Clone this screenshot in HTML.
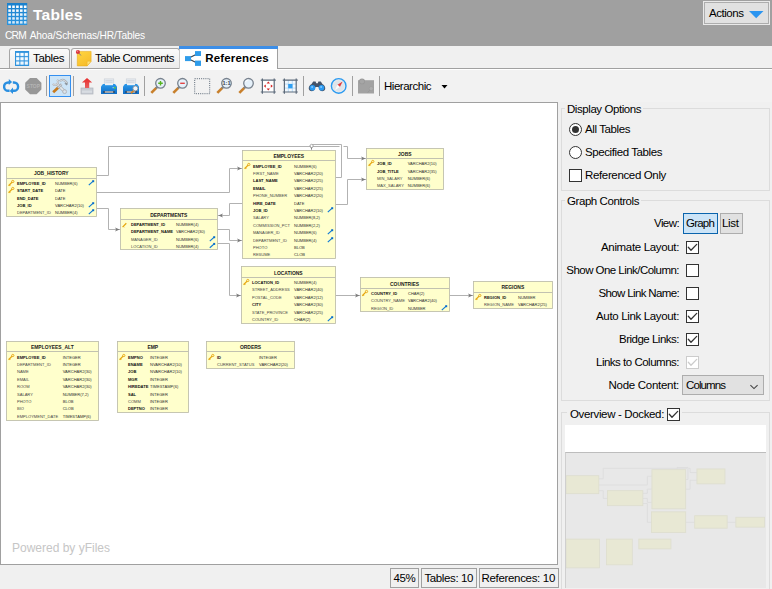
<!DOCTYPE html>
<html><head><meta charset="utf-8"><title>Tables</title>
<style>
html,body{margin:0;padding:0;}
body{width:772px;height:589px;overflow:hidden;background:#f0f0f0;position:relative;font-family:"Liberation Sans", sans-serif;}
.b{position:absolute;display:block;}
.t{position:absolute;white-space:nowrap;font-family:"Liberation Sans", sans-serif;}
</style></head><body>
<div class="b" style="left:0px;top:0px;width:772px;height:46px;background:#a0a0a0;"></div>
<svg class="b" style="left:7px;top:3px" width="21" height="22" viewBox="0 0 21 22"><defs><linearGradient id="tbg" x1="0" y1="0" x2="0" y2="1"><stop offset="0" stop-color="#1a80cc"/><stop offset="1" stop-color="#2a94de"/></linearGradient><linearGradient id="tbc" x1="0" y1="0" x2="0" y2="1"><stop offset="0" stop-color="#ffffff"/><stop offset="1" stop-color="#d8ecfa"/></linearGradient></defs><rect x="0" y="0" width="20.2" height="22" fill="url(#tbg)"/><rect x="1.3" y="2.5" width="2.6" height="2.5" fill="#fff" opacity="1.00"/><rect x="1.3" y="6.4" width="2.6" height="2.5" fill="#fff" opacity="0.95"/><rect x="1.3" y="10.3" width="2.6" height="2.5" fill="#fff" opacity="0.90"/><rect x="1.3" y="14.2" width="2.6" height="2.5" fill="#fff" opacity="0.85"/><rect x="1.3" y="18.1" width="2.6" height="2.5" fill="#fff" opacity="0.80"/><rect x="5.2" y="2.5" width="2.6" height="2.5" fill="#fff" opacity="1.00"/><rect x="5.2" y="6.4" width="2.6" height="2.5" fill="#fff" opacity="0.95"/><rect x="5.2" y="10.3" width="2.6" height="2.5" fill="#fff" opacity="0.90"/><rect x="5.2" y="14.2" width="2.6" height="2.5" fill="#fff" opacity="0.85"/><rect x="5.2" y="18.1" width="2.6" height="2.5" fill="#fff" opacity="0.80"/><rect x="9.1" y="2.5" width="2.6" height="2.5" fill="#fff" opacity="1.00"/><rect x="9.1" y="6.4" width="2.6" height="2.5" fill="#fff" opacity="0.95"/><rect x="9.1" y="10.3" width="2.6" height="2.5" fill="#fff" opacity="0.90"/><rect x="9.1" y="14.2" width="2.6" height="2.5" fill="#fff" opacity="0.85"/><rect x="9.1" y="18.1" width="2.6" height="2.5" fill="#fff" opacity="0.80"/><rect x="13.0" y="2.5" width="2.6" height="2.5" fill="#fff" opacity="1.00"/><rect x="13.0" y="6.4" width="2.6" height="2.5" fill="#fff" opacity="0.95"/><rect x="13.0" y="10.3" width="2.6" height="2.5" fill="#fff" opacity="0.90"/><rect x="13.0" y="14.2" width="2.6" height="2.5" fill="#fff" opacity="0.85"/><rect x="13.0" y="18.1" width="2.6" height="2.5" fill="#fff" opacity="0.80"/><rect x="16.9" y="2.5" width="2.6" height="2.5" fill="#fff" opacity="1.00"/><rect x="16.9" y="6.4" width="2.6" height="2.5" fill="#fff" opacity="0.95"/><rect x="16.9" y="10.3" width="2.6" height="2.5" fill="#fff" opacity="0.90"/><rect x="16.9" y="14.2" width="2.6" height="2.5" fill="#fff" opacity="0.85"/><rect x="16.9" y="18.1" width="2.6" height="2.5" fill="#fff" opacity="0.80"/></svg>
<div class="t" style="left:33.00px;top:8.03px;font-size:15.5px;line-height:14px;color:#fff;letter-spacing:0.274px;font-weight:bold;">Tables</div>
<div class="t" style="left:5.00px;top:29.17px;font-size:10.2px;line-height:14px;color:#fff;letter-spacing:-0.743px;">CRM</div>
<div class="t" style="left:29.70px;top:29.17px;font-size:10.2px;line-height:14px;color:#fff;letter-spacing:-0.162px;">Ahoa/Schemas/HR/Tables</div>
<div class="b" style="left:703px;top:1px;width:67px;height:24px;background:#e1e1e1;border:1px solid #e9e9e9;box-sizing:border-box;"></div>
<div class="b" style="left:704px;top:2px;width:65px;height:22px;background:#e1e1e1;border:1px solid #adadad;box-sizing:border-box;"></div>
<div class="t" style="left:709.00px;top:5.82px;font-size:11.5px;line-height:14px;color:#000;letter-spacing:-0.459px;">Actions</div>
<svg class="b" style="left:748px;top:10px" width="17" height="9" viewBox="0 0 17 9"><path d="M1,1 H15.5 L8.2,8.2 Z" fill="#2b95f0"/></svg>
<div class="b" style="left:0px;top:68px;width:772px;height:1px;background:#a0a0a0;"></div>
<div class="b" style="left:0px;top:69px;width:772px;height:1px;background:#fff;"></div>
<div class="b" style="left:9px;top:48px;width:61px;height:20px;background:linear-gradient(#fbfbfb,#ebebeb);border:1px solid #a6a6a6;border-bottom:none;border-radius:3px 3px 0 0;box-sizing:border-box;"></div>
<div class="b" style="left:71px;top:48px;width:109px;height:20px;background:linear-gradient(#fbfbfb,#ebebeb);border:1px solid #a6a6a6;border-bottom:none;border-radius:3px 3px 0 0;box-sizing:border-box;"></div>
<div class="b" style="left:179px;top:46px;width:99px;height:23px;background:#fff;border-right:1px solid #a0a0a0;border-left:1px solid #c8c8c8;box-sizing:border-box;"></div>
<div class="b" style="left:179px;top:46px;width:99px;height:3px;background:#3c8ee8;"></div>
<svg class="b" style="left:15px;top:51px" width="15" height="15" viewBox="0 0 15 15"><rect x="0" y="0" width="14.1" height="15" fill="#2f92dc"/><rect x="1.0" y="1.8" width="3.5" height="3.4" fill="#a8d4f4"/><rect x="1.3" y="2.1" width="2.8" height="2.7" fill="#ffffff" opacity="0.95"/><rect x="1.0" y="6.1" width="3.5" height="3.4" fill="#a8d4f4"/><rect x="1.3" y="6.4" width="2.8" height="2.7" fill="#ffffff" opacity="0.87"/><rect x="1.0" y="10.4" width="3.5" height="3.4" fill="#a8d4f4"/><rect x="1.3" y="10.7" width="2.8" height="2.7" fill="#ffffff" opacity="0.79"/><rect x="5.3" y="1.8" width="3.5" height="3.4" fill="#a8d4f4"/><rect x="5.6" y="2.1" width="2.8" height="2.7" fill="#ffffff" opacity="0.95"/><rect x="5.3" y="6.1" width="3.5" height="3.4" fill="#a8d4f4"/><rect x="5.6" y="6.4" width="2.8" height="2.7" fill="#ffffff" opacity="0.87"/><rect x="5.3" y="10.4" width="3.5" height="3.4" fill="#a8d4f4"/><rect x="5.6" y="10.7" width="2.8" height="2.7" fill="#ffffff" opacity="0.79"/><rect x="9.6" y="1.8" width="3.5" height="3.4" fill="#a8d4f4"/><rect x="9.9" y="2.1" width="2.8" height="2.7" fill="#ffffff" opacity="0.95"/><rect x="9.6" y="6.1" width="3.5" height="3.4" fill="#a8d4f4"/><rect x="9.9" y="6.4" width="2.8" height="2.7" fill="#ffffff" opacity="0.87"/><rect x="9.6" y="10.4" width="3.5" height="3.4" fill="#a8d4f4"/><rect x="9.9" y="10.7" width="2.8" height="2.7" fill="#ffffff" opacity="0.79"/></svg>
<div class="t" style="left:33.00px;top:50.52px;font-size:11.5px;line-height:14px;color:#000;letter-spacing:-0.324px;">Tables</div>
<svg class="b" style="left:75px;top:49px" width="18" height="18" viewBox="0 0 18 18"><defs><linearGradient id="ng" x1="0" y1="0" x2="0.6" y2="1"><stop offset="0" stop-color="#ffd640"/><stop offset="1" stop-color="#f7bd2c"/></linearGradient></defs><path d="M2.3,2.4 H16.1 V12.2 L12.2,16.9 H2.3 Z" fill="url(#ng)" stroke="#e8ab1c" stroke-width="0.6"/><path d="M16.1,12.2 H12.2 V16.9 Z" fill="#ffe27c" stroke="#e8ab1c" stroke-width="0.4"/><path d="M4.0,4.2 L5.9,6.5" stroke="#6c7c8c" stroke-width="0.9"/><circle cx="2.9" cy="3.0" r="2.1" fill="#d8363f"/><circle cx="2.4" cy="2.4" r="0.8" fill="#ee7c84"/></svg>
<div class="t" style="left:95.00px;top:50.52px;font-size:11.5px;line-height:14px;color:#000;letter-spacing:-0.520px;">Table Comments</div>
<svg class="b" style="left:185px;top:51px" width="16" height="15" viewBox="0 0 16 15"><path d="M3,7.5 L12.5,2.7 M3,7.5 L12.5,12.3" stroke="#364452" stroke-width="1.2" fill="none"/><rect x="0" y="5.1" width="6" height="5" fill="#2f9cea"/><rect x="10" y="0.1" width="6" height="4.9" fill="#2f9cea"/><rect x="10" y="9.6" width="6" height="5.3" fill="#2f9cea"/></svg>
<div class="t" style="left:205.30px;top:51.42px;font-size:11.5px;line-height:14px;color:#000;letter-spacing:0.149px;font-weight:bold;">References</div>
<div class="b" style="left:0px;top:70px;width:772px;height:32px;background:#f2f2f2;"></div>
<div class="b" style="left:46px;top:76px;width:1px;height:20px;background:#a0a0a0;"></div>
<div class="b" style="left:73px;top:76px;width:1px;height:20px;background:#a0a0a0;"></div>
<div class="b" style="left:144px;top:76px;width:1px;height:20px;background:#a0a0a0;"></div>
<div class="b" style="left:303px;top:76px;width:1px;height:20px;background:#a0a0a0;"></div>
<div class="b" style="left:352px;top:76px;width:1px;height:20px;background:#a0a0a0;"></div>
<div class="b" style="left:379px;top:76px;width:1px;height:20px;background:#a0a0a0;"></div>
<div class="b" style="left:49px;top:75px;width:22px;height:22px;background:#cce4f7;border:1px solid #338ff0;box-sizing:border-box;"></div>
<svg class="b" style="left:3px;top:78px" width="17" height="17" viewBox="0 0 17 17"><g fill="none" stroke="#2a8fe0" stroke-width="2.4"><path d="M6.0,4.5 H5.2 A4.1,4.15 0 0 0 5.2,12.8 H6.6"/><path d="M10.0,12.8 H11.0 A4.1,4.15 0 0 0 11.0,4.5 H9.8"/></g><path d="M5.8,1.0 L9.1,4.0 L5.8,7.0 Z" fill="#2a8fe0"/><path d="M10.0,9.6 L6.7,12.9 L10.0,16.0 Z" fill="#2a8fe0"/></svg>
<svg class="b" style="left:25px;top:78px" width="17" height="17" viewBox="0 0 17 17"><path d="M5,0 H11.6 L16.4,4.8 V11.4 L11.6,16.2 H5 L0.2,11.4 V4.8 Z" fill="#979797"/><text x="8.3" y="10.3" font-size="5.4" font-weight="bold" text-anchor="middle" fill="#b4b4b4" font-family='"Liberation Sans", sans-serif' textLength="13.4" lengthAdjust="spacingAndGlyphs">STOP</text></svg>
<svg class="b" style="left:52px;top:78px" width="17" height="17" viewBox="0 0 17 17"><path d="M5.4,6.4 L12.4,13.4" stroke="#aeb3b9" stroke-width="3.1" stroke-linecap="round"/><path d="M5.4,6.4 L12.4,13.4" stroke="#e4e7ea" stroke-width="1.6" stroke-linecap="round"/><path d="M5.2,1.8 A3.0,3.0 0 1 1 0.8,5.9" fill="none" stroke="#b2b7bd" stroke-width="2"/><path d="M5.2,1.8 A3.0,3.0 0 1 1 0.8,5.9" fill="none" stroke="#dfe2e6" stroke-width="0.8"/><circle cx="12.6" cy="13.6" r="2" fill="#d8dbdf" stroke="#a6abb1" stroke-width="0.7"/><circle cx="12.7" cy="13.7" r="0.8" fill="#d4e8f8"/><path d="M1.2,14.3 L6.3,9.5" stroke="#c87a1c" stroke-width="2.7" stroke-linecap="butt"/><path d="M6.0,9.8 L9.6,6.2" stroke="#a9aeb4" stroke-width="2.4"/><path d="M6.0,9.8 L9.6,6.2" stroke="#dcdfe3" stroke-width="0.9"/><path d="M7.8,3.2 Q10.4,0.6 13.2,3.0 L15.2,5.2" fill="none" stroke="#aab0b6" stroke-width="2.3"/><path d="M7.8,3.2 Q10.4,0.6 13.2,3.0 L15.2,5.2" fill="none" stroke="#dde0e4" stroke-width="0.9"/><path d="M12.4,5.2 L14.4,7.6 L15.8,6.2 L15.4,4.8 Z" fill="#8f969d"/></svg>
<svg class="b" style="left:79px;top:78px" width="17" height="17" viewBox="0 0 17 17"><defs><linearGradient id="eg" x1="0" y1="0" x2="0" y2="1"><stop offset="0" stop-color="#e82c2c"/><stop offset="1" stop-color="#e86060"/></linearGradient></defs><rect x="2" y="10" width="12" height="6" fill="#c9cdd4" stroke="#b0b4bc" stroke-width="0.7"/><rect x="3" y="12.6" width="10" height="2.2" fill="#d8dce2"/><path d="M8,0 L13.2,4.6 H10.2 V10 H6 V4.6 H2.9 Z" fill="url(#eg)"/></svg>
<svg class="b" style="left:100px;top:78px" width="18" height="17" viewBox="0 0 18 17"><defs><linearGradient id="pg" x1="0" y1="0" x2="0" y2="1"><stop offset="0" stop-color="#2c9aec"/><stop offset="1" stop-color="#0f6cc4"/></linearGradient></defs><rect x="4.2" y="0.9" width="9.6" height="6" fill="#e6eaf0" stroke="#c4cad2" stroke-width="0.5"/><path d="M5.4,2.6 H12.6 M5.4,4.2 H12.6" stroke="#c4cad2" stroke-width="0.6"/><path d="M3,6 H15 L17,8.4 V15.9 H1 V8.4 Z" fill="url(#pg)"/><rect x="5" y="5.6" width="8" height="1.6" fill="#eef2f6"/><rect x="3.6" y="13" width="10.8" height="2" fill="#1a2a3a"/><rect x="4.6" y="13.4" width="8.8" height="1.2" fill="#f0f4f8"/><rect x="14" y="9" width="1.6" height="1.6" fill="#5ad040"/><rect x="12.6" y="9.2" width="1" height="1" fill="#cfe8ff"/></svg>
<svg class="b" style="left:122px;top:78px" width="18" height="17" viewBox="0 0 18 17"><defs><linearGradient id="pg" x1="0" y1="0" x2="0" y2="1"><stop offset="0" stop-color="#2c9aec"/><stop offset="1" stop-color="#0f6cc4"/></linearGradient></defs><rect x="4.2" y="0.9" width="9.6" height="6" fill="#e6eaf0" stroke="#c4cad2" stroke-width="0.5"/><path d="M5.4,2.6 H12.6 M5.4,4.2 H12.6" stroke="#c4cad2" stroke-width="0.6"/><path d="M3,6 H15 L17,8.4 V15.9 H1 V8.4 Z" fill="url(#pg)"/><rect x="5" y="5.6" width="8" height="1.6" fill="#eef2f6"/><rect x="3.6" y="13" width="10.8" height="2" fill="#1a2a3a"/><rect x="4.6" y="13.4" width="8.8" height="1.2" fill="#f0f4f8"/><path d="M9,15.4 L12.2,12" stroke="#d08428" stroke-width="1.6"/><circle cx="13.4" cy="10.4" r="2.5" fill="#eef4fa" stroke="#8a929c" stroke-width="0.9"/></svg>
<svg class="b" style="left:149px;top:77px" width="18" height="18" viewBox="0 0 18 18"><path d="M2.3,15.9 L7.6,10.6" stroke="#c8802c" stroke-width="2.6" stroke-linecap="butt"/><path d="M7.0,11.2 L8.4,9.8" stroke="#7c8692" stroke-width="2.2"/><circle cx="11.5" cy="6.3" r="4.8" fill="#e6f1fa" stroke="#78828e" stroke-width="1.3"/><path d="M9.2,6.3 H13.8 M11.5,4 V8.6" stroke="#56b41e" stroke-width="1.4"/></svg>
<svg class="b" style="left:171px;top:77px" width="18" height="18" viewBox="0 0 18 18"><path d="M2.3,15.9 L7.6,10.6" stroke="#c8802c" stroke-width="2.6" stroke-linecap="butt"/><path d="M7.0,11.2 L8.4,9.8" stroke="#7c8692" stroke-width="2.2"/><circle cx="11.5" cy="6.3" r="4.8" fill="#e6f1fa" stroke="#78828e" stroke-width="1.3"/><path d="M9.2,6.3 H13.8" stroke="#e24444" stroke-width="1.4"/></svg>
<svg class="b" style="left:193px;top:77px" width="18" height="18" viewBox="0 0 18 18"><rect x="1.7" y="1.7" width="15" height="15" fill="none" stroke="#4c5a6a" stroke-width="0.9" stroke-dasharray="1,1.14"/></svg>
<svg class="b" style="left:215px;top:77px" width="18" height="18" viewBox="0 0 18 18"><path d="M2.3,15.9 L7.6,10.6" stroke="#c8802c" stroke-width="2.6" stroke-linecap="butt"/><path d="M7.0,11.2 L8.4,9.8" stroke="#7c8692" stroke-width="2.2"/><circle cx="11.5" cy="6.3" r="4.8" fill="#e6f1fa" stroke="#78828e" stroke-width="1.3"/><text x="11.5" y="8.3" font-size="5.6" font-weight="bold" text-anchor="middle" fill="#3c444c" font-family='"Liberation Sans", sans-serif'>1:1</text></svg>
<svg class="b" style="left:237px;top:77px" width="18" height="18" viewBox="0 0 18 18"><path d="M2.3,15.9 L7.6,10.6" stroke="#c8802c" stroke-width="2.6" stroke-linecap="butt"/><path d="M7.0,11.2 L8.4,9.8" stroke="#7c8692" stroke-width="2.2"/><circle cx="11.5" cy="6.3" r="4.8" fill="#e6f1fa" stroke="#78828e" stroke-width="1.3"/><path d="M8.4,5.2 A3.4,3.4 0 0 1 11.4,2.8" stroke="#fff" stroke-width="1" fill="none"/></svg>
<svg class="b" style="left:259.5px;top:77px" width="18" height="18" viewBox="0 0 18 18"><rect x="2" y="3" width="12.4" height="12.4" fill="#fff"/><path d="M2.4,1.4 V16.8 M14.2,1.4 V16.8 M0.8,3.2 H15.8 M0.8,15 H15.8" stroke="#5c6a7a" stroke-width="1.2"/><path d="M8.3,4.6 l1.7,2 h-3.4 z M8.3,13.6 l1.7,-2 h-3.4 z M3.8,9.1 l2,-1.7 v3.4 z M12.8,9.1 l-2,-1.7 v3.4 z" fill="#d42222"/></svg>
<svg class="b" style="left:281.5px;top:77px" width="18" height="18" viewBox="0 0 18 18"><rect x="2" y="3" width="12.4" height="12.4" fill="#f2f8fd"/><path d="M6.3,3 V15 M10.3,3 V15 M2,7.1 H14 M2,11.1 H14" stroke="#b4d8f4" stroke-width="0.9"/><path d="M2.4,1.4 V16.8 M14.2,1.4 V16.8 M0.8,3.2 H15.8 M0.8,15 H15.8" stroke="#5c6a7a" stroke-width="1.2"/><rect x="6.2" y="7" width="4.3" height="4.3" fill="#2e9ff2"/></svg>
<svg class="b" style="left:308px;top:78px" width="18" height="17" viewBox="0 0 18 17"><path d="M5.2,3.6 H7.6 L8.2,5.2 H9.8 L10.4,3.6 H12.8 L14.4,6 C16.6,7.4 17.6,9.2 17.2,11 C16.6,13.2 14,13.6 12.6,12.8 C11,12 10.8,10.4 10.6,9 H7.4 C7.2,10.4 7,12 5.4,12.8 C4,13.6 1.4,13.2 0.8,11 C0.4,9.2 1.4,7.4 3.6,6 Z" fill="#44546a"/><circle cx="4.5" cy="9.8" r="2.8" fill="#2b9cf4"/><circle cx="13.5" cy="9.8" r="2.8" fill="#2b9cf4"/><circle cx="4.1" cy="9.0" r="1" fill="#86c8ff"/><circle cx="13.1" cy="9.0" r="1" fill="#86c8ff"/></svg>
<svg class="b" style="left:330px;top:77px" width="18" height="18" viewBox="0 0 18 18"><circle cx="8.7" cy="8.9" r="7.3" fill="#e6eaee" stroke="#2a9af0" stroke-width="1.4"/><circle cx="8.7" cy="8.9" r="5.6" fill="#dfe4e9"/><path d="M12.6,4.6 L9.9,10.1 L7.5,7.7 Z" fill="#e23c3c"/><path d="M4.8,13.2 L7.5,7.7 L9.9,10.1 Z" fill="#fafbfc"/></svg>
<svg class="b" style="left:357px;top:78px" width="18" height="17" viewBox="0 0 18 17"><rect x="1" y="2.2" width="16" height="13.3" fill="#a2a2a2"/><circle cx="5" cy="3.5" r="3" fill="#9a9a9a"/><circle cx="5" cy="3.5" r="2.1" fill="#a6a6a6"/><circle cx="14.2" cy="10.6" r="2.1" fill="#aeaeae" stroke="#989898" stroke-width="0.6"/><path d="M12.8,12.2 L10.6,14.6" stroke="#989898" stroke-width="1"/></svg>
<div class="t" style="left:384.00px;top:79.02px;font-size:11.5px;line-height:14px;color:#000;letter-spacing:-0.476px;">Hierarchic</div>
<svg class="b" style="left:441px;top:85px" width="7" height="5" viewBox="0 0 7 5"><path d="M0.5,0.1 H6.5 L3.5,3.6 Z" fill="#000"/></svg>
<div class="b" style="left:0px;top:102px;width:558px;height:463px;background:#fff;border:1px solid #a0a0a0;box-sizing:border-box;"></div>
<svg class="b" style="left:0;top:0" width="772" height="589" viewBox="0 0 772 589" font-family='"Liberation Sans", sans-serif'><path d="M96.5,175.5 L108.5,175.5 L108.5,146.5 L339.5,146.5" fill="none" stroke="#b2b2b2" stroke-width="1"/>
<path d="M343.5,146.5 L347.5,146.5 L347.5,158.5 L366.5,158.5" fill="none" stroke="#b2b2b2" stroke-width="1"/>
<path d="M365.6,158.5 l-4.6,-2 l1.2,2 l-1.2,2 z" fill="#7a7a7a"/>
<path d="M96.5,192.5 L229.5,192.5 L229.5,168.5 L242.5,168.5" fill="none" stroke="#b2b2b2" stroke-width="1"/>
<path d="M241.6,168.5 l-4.6,-2 l1.2,2 l-1.2,2 z" fill="#7a7a7a"/>
<path d="M96.5,208.5 L108.5,208.5 L108.5,229.5 L120.5,229.5" fill="none" stroke="#b2b2b2" stroke-width="1"/>
<path d="M119.6,229.5 l-4.6,-2 l1.2,2 l-1.2,2 z" fill="#7a7a7a"/>
<path d="M242.5,203.5 L229.5,203.5 L229.5,215.5 L217.5,215.5" fill="none" stroke="#b2b2b2" stroke-width="1"/>
<path d="M218.4,215.5 l4.6,-2 l-1.2,2 l1.2,2 z" fill="#7a7a7a"/>
<path d="M217.5,229.5 L229.5,229.5 L229.5,240.5 L242.5,240.5" fill="none" stroke="#b2b2b2" stroke-width="1"/>
<path d="M241.6,240.5 l-4.6,-2 l1.2,2 l-1.2,2 z" fill="#7a7a7a"/>
<path d="M217.5,243.5 L229.5,243.5 L229.5,295.5 L241.5,295.5" fill="none" stroke="#b2b2b2" stroke-width="1"/>
<path d="M240.6,295.5 l-4.6,-2 l1.2,2 l-1.2,2 z" fill="#7a7a7a"/>
<path d="M335.5,177.5 L341.5,177.5 L341.5,144.5 L311.5,144.5 L311.5,150.5" fill="none" stroke="#b2b2b2" stroke-width="1"/>
<path d="M311.5,149.6 l-2,-4.6 l2,1.2 l2,-1.2 z" fill="#7a7a7a"/>
<path d="M335.5,204.5 L347.5,204.5 L347.5,179.5 L366.5,179.5" fill="none" stroke="#b2b2b2" stroke-width="1"/>
<path d="M365.6,179.5 l-4.6,-2 l1.2,2 l-1.2,2 z" fill="#7a7a7a"/>
<path d="M335.5,295.5 L360.5,295.5" fill="none" stroke="#b2b2b2" stroke-width="1"/>
<path d="M359.6,295.5 l-4.6,-2 l1.2,2 l-1.2,2 z" fill="#7a7a7a"/>
<path d="M449.5,295.5 L473.5,295.5" fill="none" stroke="#b2b2b2" stroke-width="1"/>
<path d="M472.6,295.5 l-4.6,-2 l1.2,2 l-1.2,2 z" fill="#7a7a7a"/>
<rect x="310.3" y="144.3" width="2.6" height="3.2" rx="1" fill="#fff" stroke="#8a8a8a" stroke-width="0.6"/>
<rect x="6.5" y="167.5" width="90.0" height="49.0" fill="#ffffcc" stroke="#bcbcaa" stroke-width="0.85"/>
<path d="M6.5,178.5 H96.5" stroke="#c2c2b0" stroke-width="1"/>
<text x="51.3" y="174.8" text-anchor="middle" font-size="4.95" font-weight="bold" fill="#1a1a1a">JOB_HISTORY</text>
<text x="17" y="184.8" font-size="4.05" font-weight="bold" fill="#111">EMPLOYEE_ID</text>
<text x="55" y="184.8" font-size="4.05" fill="#303030">NUMBER(6)</text>
<g transform="translate(8.1,180.0)"><path d="M0.5,5.7 L4.2,1.9" stroke="#e6a50c" stroke-width="1.25" fill="none"/><circle cx="4.7" cy="1.5" r="1.15" fill="#fff6c0" stroke="#e6a50c" stroke-width="0.85"/><path d="M1.3,4.9 l1,1" stroke="#e6a50c" stroke-width="0.8"/></g>
<g transform="translate(88.3,180.1)"><path d="M0.5,5.0 L4.6,1.3" stroke="#0f7ad6" stroke-width="1.2" fill="none"/><rect x="3.9" y="0.1" width="2" height="2" fill="#0a6ecc"/></g>
<text x="17" y="191.8" font-size="4.05" font-weight="bold" fill="#111">START_DATE</text>
<text x="55" y="191.8" font-size="4.05" fill="#303030">DATE</text>
<g transform="translate(8.1,187.0)"><path d="M0.5,5.7 L4.2,1.9" stroke="#e6a50c" stroke-width="1.25" fill="none"/><circle cx="4.7" cy="1.5" r="1.15" fill="#fff6c0" stroke="#e6a50c" stroke-width="0.85"/><path d="M1.3,4.9 l1,1" stroke="#e6a50c" stroke-width="0.8"/></g>
<text x="17" y="199.8" font-size="4.05" font-weight="bold" fill="#111">END_DATE</text>
<text x="55" y="199.8" font-size="4.05" fill="#303030">DATE</text>
<text x="17" y="206.8" font-size="4.05" font-weight="bold" fill="#111">JOB_ID</text>
<text x="55" y="206.8" font-size="4.05" fill="#303030">VARCHAR2(10)</text>
<g transform="translate(88.3,202.1)"><path d="M0.5,5.0 L4.6,1.3" stroke="#0f7ad6" stroke-width="1.2" fill="none"/><rect x="3.9" y="0.1" width="2" height="2" fill="#0a6ecc"/></g>
<text x="17" y="213.8" font-size="4.05" fill="#484848">DEPARTMENT_ID</text>
<text x="55" y="213.8" font-size="4.05" fill="#303030">NUMBER(4)</text>
<g transform="translate(88.3,209.1)"><path d="M0.5,5.0 L4.6,1.3" stroke="#0f7ad6" stroke-width="1.2" fill="none"/><rect x="3.9" y="0.1" width="2" height="2" fill="#0a6ecc"/></g>
<rect x="120.5" y="208.5" width="97.0" height="41.0" fill="#ffffcc" stroke="#bcbcaa" stroke-width="0.85"/>
<path d="M120.5,219.5 H217.5" stroke="#c2c2b0" stroke-width="1"/>
<text x="168.8" y="216.5" text-anchor="middle" font-size="4.95" font-weight="bold" fill="#1a1a1a">DEPARTMENTS</text>
<text x="131" y="226.2" font-size="4.05" font-weight="bold" fill="#111">DEPARTMENT_ID</text>
<text x="176" y="226.2" font-size="4.05" fill="#303030">NUMBER(4)</text>
<g transform="translate(122.1,221.4)"><path d="M0.5,5.7 L4.2,1.9" stroke="#e6a50c" stroke-width="1.25" fill="none"/><path d="M1.3,4.9 l1,1" stroke="#e6a50c" stroke-width="0.8"/></g>
<text x="131" y="232.8" font-size="4.05" font-weight="bold" fill="#111">DEPARTMENT_NAME</text>
<text x="176" y="232.8" font-size="4.05" fill="#303030">VARCHAR2(30)</text>
<text x="131" y="240.8" font-size="4.05" fill="#484848">MANAGER_ID</text>
<text x="176" y="240.8" font-size="4.05" fill="#303030">NUMBER(6)</text>
<g transform="translate(209.3,236.1)"><path d="M0.5,5.0 L4.6,1.3" stroke="#0f7ad6" stroke-width="1.2" fill="none"/><rect x="3.9" y="0.1" width="2" height="2" fill="#0a6ecc"/></g>
<text x="131" y="247.5" font-size="4.05" fill="#484848">LOCATION_ID</text>
<text x="176" y="247.5" font-size="4.05" fill="#303030">NUMBER(4)</text>
<g transform="translate(209.3,242.8)"><path d="M0.5,5.0 L4.6,1.3" stroke="#0f7ad6" stroke-width="1.2" fill="none"/><rect x="3.9" y="0.1" width="2" height="2" fill="#0a6ecc"/></g>
<rect x="242.5" y="150.5" width="93.0" height="108.0" fill="#ffffcc" stroke="#bcbcaa" stroke-width="0.85"/>
<path d="M242.5,160.5 H335.5" stroke="#c2c2b0" stroke-width="1"/>
<text x="288.8" y="157.8" text-anchor="middle" font-size="4.95" font-weight="bold" fill="#1a1a1a">EMPLOYEES</text>
<text x="253" y="167.8" font-size="4.05" font-weight="bold" fill="#111">EMPLOYEE_ID</text>
<text x="294" y="167.8" font-size="4.05" fill="#303030">NUMBER(6)</text>
<g transform="translate(244.1,163.0)"><path d="M0.5,5.7 L4.2,1.9" stroke="#e6a50c" stroke-width="1.25" fill="none"/><circle cx="4.7" cy="1.5" r="1.15" fill="#fff6c0" stroke="#e6a50c" stroke-width="0.85"/><path d="M1.3,4.9 l1,1" stroke="#e6a50c" stroke-width="0.8"/></g>
<text x="253" y="174.8" font-size="4.05" fill="#484848">FIRST_NAME</text>
<text x="294" y="174.8" font-size="4.05" fill="#303030">VARCHAR2(20)</text>
<text x="253" y="181.8" font-size="4.05" font-weight="bold" fill="#111">LAST_NAME</text>
<text x="294" y="181.8" font-size="4.05" fill="#303030">VARCHAR2(25)</text>
<text x="253" y="189.8" font-size="4.05" font-weight="bold" fill="#111">EMAIL</text>
<text x="294" y="189.8" font-size="4.05" fill="#303030">VARCHAR2(25)</text>
<text x="253" y="196.8" font-size="4.05" fill="#484848">PHONE_NUMBER</text>
<text x="294" y="196.8" font-size="4.05" fill="#303030">VARCHAR2(20)</text>
<text x="253" y="204.8" font-size="4.05" font-weight="bold" fill="#111">HIRE_DATE</text>
<text x="294" y="204.8" font-size="4.05" fill="#303030">DATE</text>
<text x="253" y="211.8" font-size="4.05" font-weight="bold" fill="#111">JOB_ID</text>
<text x="294" y="211.8" font-size="4.05" fill="#303030">VARCHAR2(10)</text>
<g transform="translate(327.3,207.1)"><path d="M0.5,5.0 L4.6,1.3" stroke="#0f7ad6" stroke-width="1.2" fill="none"/><rect x="3.9" y="0.1" width="2" height="2" fill="#0a6ecc"/></g>
<text x="253" y="218.8" font-size="4.05" fill="#484848">SALARY</text>
<text x="294" y="218.8" font-size="4.05" fill="#303030">NUMBER(8,2)</text>
<text x="253" y="226.8" font-size="4.05" fill="#484848">COMMISSION_PCT</text>
<text x="294" y="226.8" font-size="4.05" fill="#303030">NUMBER(2,2)</text>
<text x="253" y="233.8" font-size="4.05" fill="#484848">MANAGER_ID</text>
<text x="294" y="233.8" font-size="4.05" fill="#303030">NUMBER(6)</text>
<g transform="translate(327.3,229.1)"><path d="M0.5,5.0 L4.6,1.3" stroke="#0f7ad6" stroke-width="1.2" fill="none"/><rect x="3.9" y="0.1" width="2" height="2" fill="#0a6ecc"/></g>
<text x="253" y="241.8" font-size="4.05" fill="#484848">DEPARTMENT_ID</text>
<text x="294" y="241.8" font-size="4.05" fill="#303030">NUMBER(4)</text>
<g transform="translate(327.3,237.1)"><path d="M0.5,5.0 L4.6,1.3" stroke="#0f7ad6" stroke-width="1.2" fill="none"/><rect x="3.9" y="0.1" width="2" height="2" fill="#0a6ecc"/></g>
<text x="253" y="248.8" font-size="4.05" fill="#484848">PHOTO</text>
<text x="294" y="248.8" font-size="4.05" fill="#303030">BLOB</text>
<text x="253" y="255.8" font-size="4.05" fill="#484848">RESUME</text>
<text x="294" y="255.8" font-size="4.05" fill="#303030">CLOB</text>
<rect x="366.5" y="148.5" width="77.0" height="41.0" fill="#ffffcc" stroke="#bcbcaa" stroke-width="0.85"/>
<path d="M366.5,158.5 H443.5" stroke="#c2c2b0" stroke-width="1"/>
<text x="404.8" y="155.8" text-anchor="middle" font-size="4.95" font-weight="bold" fill="#1a1a1a">JOBS</text>
<text x="377" y="164.8" font-size="4.05" font-weight="bold" fill="#111">JOB_ID</text>
<text x="407.7" y="164.8" font-size="4.05" fill="#303030">VARCHAR2(10)</text>
<g transform="translate(368.1,160.0)"><path d="M0.5,5.7 L4.2,1.9" stroke="#e6a50c" stroke-width="1.25" fill="none"/><circle cx="4.7" cy="1.5" r="1.15" fill="#fff6c0" stroke="#e6a50c" stroke-width="0.85"/><path d="M1.3,4.9 l1,1" stroke="#e6a50c" stroke-width="0.8"/></g>
<text x="377" y="172.8" font-size="4.05" font-weight="bold" fill="#111">JOB_TITLE</text>
<text x="407.7" y="172.8" font-size="4.05" fill="#303030">VARCHAR2(35)</text>
<text x="377" y="179.8" font-size="4.05" fill="#484848">MIN_SALARY</text>
<text x="407.7" y="179.8" font-size="4.05" fill="#303030">NUMBER(6)</text>
<text x="377" y="186.8" font-size="4.05" fill="#484848">MAX_SALARY</text>
<text x="407.7" y="186.8" font-size="4.05" fill="#303030">NUMBER(6)</text>
<rect x="241.5" y="266.5" width="94.0" height="57.0" fill="#ffffcc" stroke="#bcbcaa" stroke-width="0.85"/>
<path d="M241.5,277.5 H335.5" stroke="#c2c2b0" stroke-width="1"/>
<text x="288.3" y="274.5" text-anchor="middle" font-size="4.95" font-weight="bold" fill="#1a1a1a">LOCATIONS</text>
<text x="252" y="283.8" font-size="4.05" font-weight="bold" fill="#111">LOCATION_ID</text>
<text x="294" y="283.8" font-size="4.05" fill="#303030">NUMBER(4)</text>
<g transform="translate(243.1,279.0)"><path d="M0.5,5.7 L4.2,1.9" stroke="#e6a50c" stroke-width="1.25" fill="none"/><circle cx="4.7" cy="1.5" r="1.15" fill="#fff6c0" stroke="#e6a50c" stroke-width="0.85"/><path d="M1.3,4.9 l1,1" stroke="#e6a50c" stroke-width="0.8"/></g>
<text x="252" y="290.8" font-size="4.05" fill="#484848">STREET_ADDRESS</text>
<text x="294" y="290.8" font-size="4.05" fill="#303030">VARCHAR2(40)</text>
<text x="252" y="298.8" font-size="4.05" fill="#484848">POSTAL_CODE</text>
<text x="294" y="298.8" font-size="4.05" fill="#303030">VARCHAR2(12)</text>
<text x="252" y="305.8" font-size="4.05" font-weight="bold" fill="#111">CITY</text>
<text x="294" y="305.8" font-size="4.05" fill="#303030">VARCHAR2(30)</text>
<text x="252" y="313.8" font-size="4.05" fill="#484848">STATE_PROVINCE</text>
<text x="294" y="313.8" font-size="4.05" fill="#303030">VARCHAR2(25)</text>
<text x="252" y="320.8" font-size="4.05" fill="#484848">COUNTRY_ID</text>
<text x="294" y="320.8" font-size="4.05" fill="#303030">CHAR(2)</text>
<g transform="translate(327.3,316.1)"><path d="M0.5,5.0 L4.6,1.3" stroke="#0f7ad6" stroke-width="1.2" fill="none"/><rect x="3.9" y="0.1" width="2" height="2" fill="#0a6ecc"/></g>
<rect x="360.5" y="277.5" width="89.0" height="34.0" fill="#ffffcc" stroke="#bcbcaa" stroke-width="0.85"/>
<path d="M360.5,288.5 H449.5" stroke="#c2c2b0" stroke-width="1"/>
<text x="404.6" y="285.8" text-anchor="middle" font-size="4.95" font-weight="bold" fill="#1a1a1a">COUNTRIES</text>
<text x="371" y="294.8" font-size="4.05" font-weight="bold" fill="#111">COUNTRY_ID</text>
<text x="408" y="294.8" font-size="4.05" fill="#303030">CHAR(2)</text>
<g transform="translate(361.8,290.0)"><path d="M0.5,5.7 L4.2,1.9" stroke="#e6a50c" stroke-width="1.25" fill="none"/><circle cx="4.7" cy="1.5" r="1.15" fill="#fff6c0" stroke="#e6a50c" stroke-width="0.85"/><path d="M1.3,4.9 l1,1" stroke="#e6a50c" stroke-width="0.8"/></g>
<text x="371" y="301.8" font-size="4.05" fill="#484848">COUNTRY_NAME</text>
<text x="408" y="301.8" font-size="4.05" fill="#303030">VARCHAR2(40)</text>
<text x="371" y="309.8" font-size="4.05" fill="#484848">REGION_ID</text>
<text x="408" y="309.8" font-size="4.05" fill="#303030">NUMBER</text>
<g transform="translate(441.3,305.1)"><path d="M0.5,5.0 L4.6,1.3" stroke="#0f7ad6" stroke-width="1.2" fill="none"/><rect x="3.9" y="0.1" width="2" height="2" fill="#0a6ecc"/></g>
<rect x="473.5" y="281.5" width="79.0" height="27.0" fill="#ffffcc" stroke="#bcbcaa" stroke-width="0.85"/>
<path d="M473.5,292.5 H552.5" stroke="#c2c2b0" stroke-width="1"/>
<text x="512.8" y="288.5" text-anchor="middle" font-size="4.95" font-weight="bold" fill="#1a1a1a">REGIONS</text>
<text x="484" y="298.8" font-size="4.05" font-weight="bold" fill="#111">REGION_ID</text>
<text x="518" y="298.8" font-size="4.05" fill="#303030">NUMBER</text>
<g transform="translate(475.1,294.0)"><path d="M0.5,5.7 L4.2,1.9" stroke="#e6a50c" stroke-width="1.25" fill="none"/><circle cx="4.7" cy="1.5" r="1.15" fill="#fff6c0" stroke="#e6a50c" stroke-width="0.85"/><path d="M1.3,4.9 l1,1" stroke="#e6a50c" stroke-width="0.8"/></g>
<text x="484" y="305.8" font-size="4.05" fill="#484848">REGION_NAME</text>
<text x="518" y="305.8" font-size="4.05" fill="#303030">VARCHAR2(25)</text>
<rect x="6.5" y="341.5" width="92.0" height="79.0" fill="#ffffcc" stroke="#bcbcaa" stroke-width="0.85"/>
<path d="M6.5,351.5 H98.5" stroke="#c2c2b0" stroke-width="1"/>
<text x="52.3" y="348.8" text-anchor="middle" font-size="4.95" font-weight="bold" fill="#1a1a1a">EMPLOYEES_ALT</text>
<text x="17" y="358.8" font-size="4.05" font-weight="bold" fill="#111">EMPLOYEE_ID</text>
<text x="62.7" y="358.8" font-size="4.05" fill="#303030">INTEGER</text>
<g transform="translate(8.1,354.0)"><path d="M0.5,5.7 L4.2,1.9" stroke="#e6a50c" stroke-width="1.25" fill="none"/><circle cx="4.7" cy="1.5" r="1.15" fill="#fff6c0" stroke="#e6a50c" stroke-width="0.85"/><path d="M1.3,4.9 l1,1" stroke="#e6a50c" stroke-width="0.8"/></g>
<text x="17" y="365.8" font-size="4.05" fill="#484848">DEPARTMENT_ID</text>
<text x="62.7" y="365.8" font-size="4.05" fill="#303030">INTEGER</text>
<text x="17" y="372.8" font-size="4.05" fill="#484848">NAME</text>
<text x="62.7" y="372.8" font-size="4.05" fill="#303030">VARCHAR2(30)</text>
<text x="17" y="380.8" font-size="4.05" fill="#484848">EMAIL</text>
<text x="62.7" y="380.8" font-size="4.05" fill="#303030">VARCHAR2(30)</text>
<text x="17" y="387.8" font-size="4.05" fill="#484848">ROOM</text>
<text x="62.7" y="387.8" font-size="4.05" fill="#303030">VARCHAR2(30)</text>
<text x="17" y="395.8" font-size="4.05" fill="#484848">SALARY</text>
<text x="62.7" y="395.8" font-size="4.05" fill="#303030">NUMBER(7,2)</text>
<text x="17" y="402.8" font-size="4.05" fill="#484848">PHOTO</text>
<text x="62.7" y="402.8" font-size="4.05" fill="#303030">BLOB</text>
<text x="17" y="409.8" font-size="4.05" fill="#484848">BIO</text>
<text x="62.7" y="409.8" font-size="4.05" fill="#303030">CLOB</text>
<text x="17" y="417.8" font-size="4.05" fill="#484848">EMPLOYMENT_DATE</text>
<text x="62.7" y="417.8" font-size="4.05" fill="#303030">TIMESTAMP(6)</text>
<rect x="117.5" y="341.5" width="71.0" height="71.0" fill="#ffffcc" stroke="#bcbcaa" stroke-width="0.85"/>
<path d="M117.5,351.5 H188.5" stroke="#c2c2b0" stroke-width="1"/>
<text x="152.8" y="348.8" text-anchor="middle" font-size="4.95" font-weight="bold" fill="#1a1a1a">EMP</text>
<text x="128" y="358.8" font-size="4.05" font-weight="bold" fill="#111">EMPNO</text>
<text x="150" y="358.8" font-size="4.05" fill="#303030">INTEGER</text>
<g transform="translate(119.1,354.0)"><path d="M0.5,5.7 L4.2,1.9" stroke="#e6a50c" stroke-width="1.25" fill="none"/><circle cx="4.7" cy="1.5" r="1.15" fill="#fff6c0" stroke="#e6a50c" stroke-width="0.85"/><path d="M1.3,4.9 l1,1" stroke="#e6a50c" stroke-width="0.8"/></g>
<text x="128" y="365.8" font-size="4.05" font-weight="bold" fill="#111">ENAME</text>
<text x="150" y="365.8" font-size="4.05" fill="#303030">NVARCHAR2(10)</text>
<text x="128" y="372.8" font-size="4.05" font-weight="bold" fill="#111">JOB</text>
<text x="150" y="372.8" font-size="4.05" fill="#303030">NVARCHAR2(10)</text>
<text x="128" y="380.8" font-size="4.05" font-weight="bold" fill="#111">MGR</text>
<text x="150" y="380.8" font-size="4.05" fill="#303030">INTEGER</text>
<text x="128" y="387.8" font-size="4.05" font-weight="bold" fill="#111">HIREDATE</text>
<text x="150" y="387.8" font-size="4.05" fill="#303030">TIMESTAMP(6)</text>
<text x="128" y="395.8" font-size="4.05" font-weight="bold" fill="#111">SAL</text>
<text x="150" y="395.8" font-size="4.05" fill="#303030">INTEGER</text>
<text x="128" y="402.8" font-size="4.05" fill="#484848">COMM</text>
<text x="150" y="402.8" font-size="4.05" fill="#303030">INTEGER</text>
<text x="128" y="409.8" font-size="4.05" font-weight="bold" fill="#111">DEPTNO</text>
<text x="150" y="409.8" font-size="4.05" fill="#303030">INTEGER</text>
<rect x="206.5" y="341.5" width="88.0" height="27.0" fill="#ffffcc" stroke="#bcbcaa" stroke-width="0.85"/>
<path d="M206.5,351.5 H294.5" stroke="#c2c2b0" stroke-width="1"/>
<text x="250.5" y="348.8" text-anchor="middle" font-size="4.95" font-weight="bold" fill="#1a1a1a">ORDERS</text>
<text x="217" y="358.8" font-size="4.05" font-weight="bold" fill="#111">ID</text>
<text x="259" y="358.8" font-size="4.05" fill="#303030">INTEGER</text>
<g transform="translate(208.1,354.0)"><path d="M0.5,5.7 L4.2,1.9" stroke="#e6a50c" stroke-width="1.25" fill="none"/><circle cx="4.7" cy="1.5" r="1.15" fill="#fff6c0" stroke="#e6a50c" stroke-width="0.85"/><path d="M1.3,4.9 l1,1" stroke="#e6a50c" stroke-width="0.8"/></g>
<text x="217" y="365.8" font-size="4.05" fill="#484848">CURRENT_STATUS</text>
<text x="259" y="365.8" font-size="4.05" fill="#303030">VARCHAR2(20)</text></svg>
<div class="t" style="left:12.00px;top:540.54px;font-size:12px;line-height:14px;color:#c6c6c6;letter-spacing:-0.002px;">Powered by yFiles</div>
<div class="b" style="left:390px;top:568px;width:29px;height:20px;background:#f0f0f0;border:1px solid #a0a0a0;box-sizing:border-box;"></div>
<div class="t" style="left:393.50px;top:570.52px;font-size:11.5px;line-height:14px;color:#000;letter-spacing:-0.339px;">45%</div>
<div class="b" style="left:421px;top:568px;width:56px;height:20px;background:#f0f0f0;border:1px solid #a0a0a0;box-sizing:border-box;"></div>
<div class="t" style="left:424.50px;top:570.52px;font-size:11.5px;line-height:14px;color:#000;letter-spacing:-0.392px;">Tables: 10</div>
<div class="b" style="left:479px;top:568px;width:80px;height:20px;background:#f0f0f0;border:1px solid #a0a0a0;box-sizing:border-box;"></div>
<div class="t" style="left:481.50px;top:570.52px;font-size:11.5px;line-height:14px;color:#000;letter-spacing:-0.321px;">References: 10</div>
<div class="b" style="left:561px;top:108px;width:209px;height:83px;border:1px solid #dcdcdc;box-sizing:border-box;"></div>
<div class="b" style="left:565px;top:104px;width:78px;height:12px;background:#f0f0f0;"></div>
<div class="t" style="left:567.00px;top:102.02px;font-size:11.5px;line-height:14px;color:#000;letter-spacing:-0.436px;">Display Options</div>
<svg class="b" style="left:569px;top:123px" width="13" height="13" viewBox="0 0 13 13"><circle cx="6.5" cy="6.5" r="6" fill="#fff" stroke="#333" stroke-width="1"/><circle cx="6.5" cy="6.5" r="3.5" fill="#333"/></svg>
<div class="t" style="left:585.00px;top:122.02px;font-size:11.5px;line-height:14px;color:#000;letter-spacing:-0.401px;">All Tables</div>
<svg class="b" style="left:569px;top:146px" width="13" height="13" viewBox="0 0 13 13"><circle cx="6.5" cy="6.5" r="6" fill="#fff" stroke="#333" stroke-width="1"/></svg>
<div class="t" style="left:585.00px;top:145.02px;font-size:11.5px;line-height:14px;color:#000;letter-spacing:-0.409px;">Specified Tables</div>
<svg class="b" style="left:569px;top:169px" width="13" height="13" viewBox="0 0 13 13"><rect x="0.5" y="0.5" width="12" height="12" fill="#fff" stroke="#333" stroke-width="1"/></svg>
<div class="t" style="left:585.00px;top:168.02px;font-size:11.5px;line-height:14px;color:#000;letter-spacing:-0.353px;">Referenced Only</div>
<div class="b" style="left:561px;top:200px;width:209px;height:201px;border:1px solid #dcdcdc;box-sizing:border-box;"></div>
<div class="b" style="left:565px;top:195px;width:76px;height:12px;background:#f0f0f0;"></div>
<div class="t" style="left:567.00px;top:193.52px;font-size:11.5px;line-height:14px;color:#000;letter-spacing:-0.427px;">Graph Controls</div>
<div class="t" style="left:654.00px;top:215.52px;font-size:11.5px;line-height:14px;color:#000;letter-spacing:-0.583px;">View:</div>
<div class="b" style="left:683px;top:213px;width:35px;height:21px;background:#cce4f7;border:1px solid #0a64ad;box-sizing:border-box;"></div>
<div class="t" style="left:686.00px;top:215.52px;font-size:11.5px;line-height:14px;color:#000;letter-spacing:-0.793px;">Graph</div>
<div class="b" style="left:720px;top:213px;width:23px;height:21px;background:#e1e1e1;border:1px solid #adadad;box-sizing:border-box;"></div>
<div class="t" style="left:722.00px;top:215.52px;font-size:11.5px;line-height:14px;color:#000;letter-spacing:-0.349px;">List</div>
<div class="t" style="left:601.00px;top:240.02px;font-size:11.5px;line-height:14px;color:#000;letter-spacing:-0.340px;">Animate Layout:</div>
<svg class="b" style="left:686px;top:241px" width="13" height="13" viewBox="0 0 13 13"><rect x="0.5" y="0.5" width="12" height="12" fill="#fff" stroke="#333" stroke-width="1"/><path d="M2.3,6.3 L5.0,9.2 L10.7,3.4" fill="none" stroke="#333" stroke-width="1.3" stroke-linecap="round" stroke-linejoin="round"/></svg>
<div class="t" style="left:566.30px;top:263.02px;font-size:11.5px;line-height:14px;color:#000;letter-spacing:-0.539px;">Show One Link/Column:</div>
<svg class="b" style="left:686px;top:264px" width="13" height="13" viewBox="0 0 13 13"><rect x="0.5" y="0.5" width="12" height="12" fill="#fff" stroke="#333" stroke-width="1"/></svg>
<div class="t" style="left:598.50px;top:286.02px;font-size:11.5px;line-height:14px;color:#000;letter-spacing:-0.642px;">Show Link Name:</div>
<svg class="b" style="left:686px;top:287px" width="13" height="13" viewBox="0 0 13 13"><rect x="0.5" y="0.5" width="12" height="12" fill="#fff" stroke="#333" stroke-width="1"/></svg>
<div class="t" style="left:596.00px;top:309.02px;font-size:11.5px;line-height:14px;color:#000;letter-spacing:-0.345px;">Auto Link Layout:</div>
<svg class="b" style="left:686px;top:310px" width="13" height="13" viewBox="0 0 13 13"><rect x="0.5" y="0.5" width="12" height="12" fill="#fff" stroke="#333" stroke-width="1"/><path d="M2.3,6.3 L5.0,9.2 L10.7,3.4" fill="none" stroke="#333" stroke-width="1.3" stroke-linecap="round" stroke-linejoin="round"/></svg>
<div class="t" style="left:619.00px;top:332.02px;font-size:11.5px;line-height:14px;color:#000;letter-spacing:-0.499px;">Bridge Links:</div>
<svg class="b" style="left:686px;top:333px" width="13" height="13" viewBox="0 0 13 13"><rect x="0.5" y="0.5" width="12" height="12" fill="#fff" stroke="#333" stroke-width="1"/><path d="M2.3,6.3 L5.0,9.2 L10.7,3.4" fill="none" stroke="#333" stroke-width="1.3" stroke-linecap="round" stroke-linejoin="round"/></svg>
<div class="t" style="left:596.00px;top:355.02px;font-size:11.5px;line-height:14px;color:#000;letter-spacing:-0.494px;">Links to Columns:</div>
<svg class="b" style="left:686px;top:356px" width="13" height="13" viewBox="0 0 13 13"><rect x="0.5" y="0.5" width="12" height="12" fill="#fff" stroke="#cccccc" stroke-width="1"/><path d="M2.3,6.3 L5.0,9.2 L10.7,3.4" fill="none" stroke="#cccccc" stroke-width="1.3" stroke-linecap="round" stroke-linejoin="round"/></svg>
<div class="t" style="left:608.50px;top:377.52px;font-size:11.5px;line-height:14px;color:#000;letter-spacing:-0.282px;">Node Content:</div>
<div class="b" style="left:682px;top:375px;width:82px;height:20px;background:#e1e1e1;border:1px solid #adadad;box-sizing:border-box;"></div>
<div class="t" style="left:686.00px;top:377.52px;font-size:11.5px;line-height:14px;color:#000;letter-spacing:-0.911px;">Columns</div>
<svg class="b" style="left:749px;top:383px" width="11" height="7" viewBox="0 0 11 7"><path d="M1.4,2.2 L5,5.6 L8.6,2.2" fill="none" stroke="#444" stroke-width="1.1"/></svg>
<div class="b" style="left:561px;top:412px;width:209px;height:180px;border:1px solid #dcdcdc;box-sizing:border-box;"></div>
<div class="b" style="left:567px;top:406px;width:115px;height:13px;background:#f0f0f0;"></div>
<div class="t" style="left:570.00px;top:407.02px;font-size:11.5px;line-height:14px;color:#000;letter-spacing:-0.352px;">Overview - Docked:</div>
<svg class="b" style="left:667px;top:408px" width="13" height="13" viewBox="0 0 13 13"><rect x="0.5" y="0.5" width="12" height="12" fill="#fff" stroke="#333" stroke-width="1"/><path d="M2.3,6.3 L5.0,9.2 L10.7,3.4" fill="none" stroke="#333" stroke-width="1.3" stroke-linecap="round" stroke-linejoin="round"/></svg>
<div class="b" style="left:565px;top:425px;width:201px;height:27px;background:#fff;"></div>
<div class="b" style="left:565px;top:452px;width:201px;height:136px;background:#e8e8e8;border-top:1px solid #bdbdbd;border-left:1px solid #cfcfcf;box-sizing:border-box;"></div>
<svg class="b" style="left:566px;top:453px" width="200" height="135" viewBox="0 0 200 135"><g transform="translate(-2.18,-37.97) scale(0.3635)"><path d="M96.3,175.3 L108.3,175.3 L108.3,146.5 L339.5,146.5" fill="none" stroke="#dcdcdc" stroke-width="2.4"/>
<path d="M343.0,146.5 L347.3,146.5 L347.3,158.3 L366.0,158.3" fill="none" stroke="#dcdcdc" stroke-width="2.4"/>
<path d="M96.3,192.3 L229.7,192.3 L229.7,168.3 L242.3,168.3" fill="none" stroke="#dcdcdc" stroke-width="2.4"/>
<path d="M96.3,208.0 L108.3,208.0 L108.3,229.3 L120.3,229.3" fill="none" stroke="#dcdcdc" stroke-width="2.4"/>
<path d="M242.3,203.7 L229.7,203.7 L229.7,215.3 L217.5,215.3" fill="none" stroke="#dcdcdc" stroke-width="2.4"/>
<path d="M217.3,229.3 L229.7,229.3 L229.7,240.3 L242.3,240.3" fill="none" stroke="#dcdcdc" stroke-width="2.4"/>
<path d="M217.3,243.3 L229.7,243.3 L229.7,295.0 L241.3,295.0" fill="none" stroke="#dcdcdc" stroke-width="2.4"/>
<path d="M335.3,177.3 L341.3,177.3 L341.3,144.3 L311.5,144.3 L311.5,150.3" fill="none" stroke="#dcdcdc" stroke-width="2.4"/>
<path d="M335.3,204.0 L347.3,204.0 L347.3,179.3 L366.0,179.3" fill="none" stroke="#dcdcdc" stroke-width="2.4"/>
<path d="M335.3,295.0 L360.0,295.0" fill="none" stroke="#dcdcdc" stroke-width="2.4"/>
<path d="M449.3,295.0 L473.3,295.0" fill="none" stroke="#dcdcdc" stroke-width="2.4"/>
<rect x="6.3" y="167.0" width="90.0" height="49.3" fill="#e8e8d4" stroke="#dedecf" stroke-width="2.4"/>
<rect x="120.3" y="208.0" width="97.0" height="41.3" fill="#e8e8d4" stroke="#dedecf" stroke-width="2.4"/>
<rect x="242.3" y="150.3" width="93.0" height="107.7" fill="#e8e8d4" stroke="#dedecf" stroke-width="2.4"/>
<rect x="366.3" y="148.3" width="77.0" height="41.0" fill="#e8e8d4" stroke="#dedecf" stroke-width="2.4"/>
<rect x="241.3" y="266.3" width="94.0" height="56.7" fill="#e8e8d4" stroke="#dedecf" stroke-width="2.4"/>
<rect x="360.0" y="277.0" width="89.3" height="34.3" fill="#e8e8d4" stroke="#dedecf" stroke-width="2.4"/>
<rect x="473.3" y="281.3" width="79.0" height="27.0" fill="#e8e8d4" stroke="#dedecf" stroke-width="2.4"/>
<rect x="6.3" y="341.3" width="92.0" height="79.0" fill="#e8e8d4" stroke="#dedecf" stroke-width="2.4"/>
<rect x="117.3" y="341.3" width="71.0" height="70.7" fill="#e8e8d4" stroke="#dedecf" stroke-width="2.4"/>
<rect x="206.3" y="341.3" width="88.4" height="27.0" fill="#e8e8d4" stroke="#dedecf" stroke-width="2.4"/></g></svg>
</body></html>
